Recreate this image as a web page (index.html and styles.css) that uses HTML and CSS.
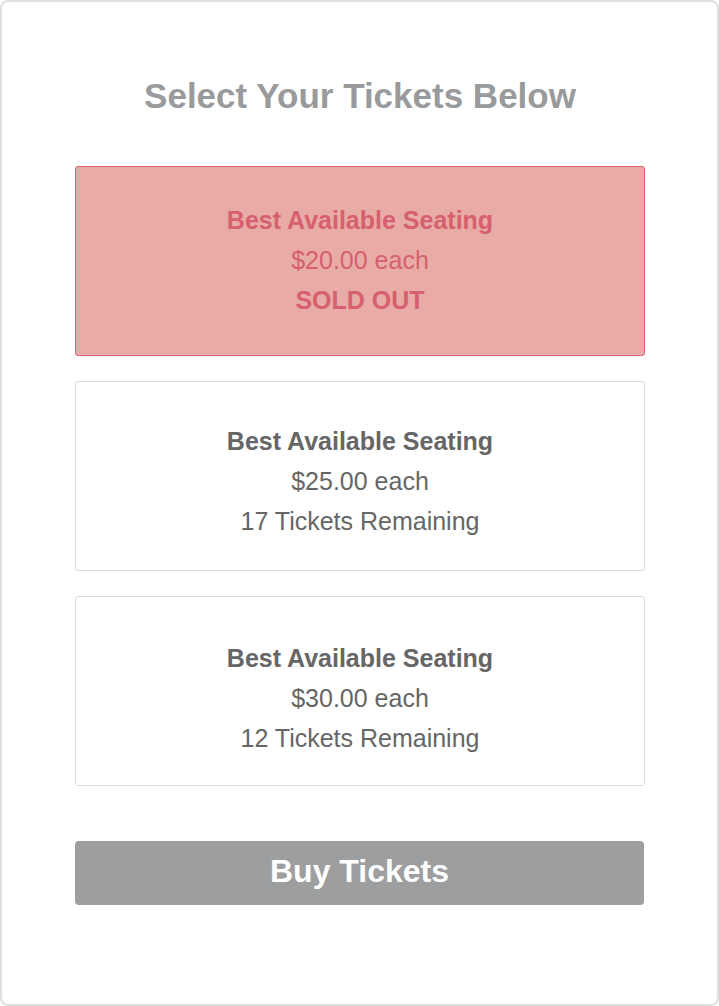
FILE: index.html
```html
<!DOCTYPE html>
<html>
<head>
<meta charset="utf-8">
<link rel="stylesheet" href="styles.css">
</head>
<body>
<div class="panel">
  <h1 class="title">Select Your Tickets Below</h1>
  <div class="tickets">
    <div class="ticket sold">
      <div class="name">Best Available Seating</div>
      <div class="price">$20.00 each</div>
      <div class="status">SOLD OUT</div>
    </div>
    <div class="ticket second">
      <div class="name">Best Available Seating</div>
      <div class="price">$25.00 each</div>
      <div class="remaining">17 Tickets Remaining</div>
    </div>
    <div class="ticket third">
      <div class="name">Best Available Seating</div>
      <div class="price">$30.00 each</div>
      <div class="remaining">12 Tickets Remaining</div>
    </div>
  </div>
  <button class="buy">Buy Tickets</button>
</div>
</body>
</html>
```
FILE: styles.css
```css
html, body {
  margin: 0;
  padding: 0;
  background: #fff;
}
body {
  font-family: "Liberation Sans", Arial, sans-serif;
}
.panel {
  box-sizing: border-box;
  width: 719px;
  height: 1006px;
  border: 2px solid #e0e0e0;
  border-radius: 8px;
  padding: 0 72px 0 73px;
  display: flex;
  flex-direction: column;
}
.title {
  margin: 72px 0 0;
  font-size: 35px;
  line-height: 44px;
  font-weight: bold;
  color: #999a9b;
  text-align: center;
}
.tickets {
  margin-top: 48px;
  display: flex;
  flex-direction: column;
  gap: 25px;
}
.ticket {
  box-sizing: border-box;
  height: 190px;
  padding-top: 33px;
  border: 1px solid #dcdcdc;
  border-radius: 3px;
  display: flex;
  flex-direction: column;
  align-items: center;
  color: #666;
  font-size: 25px;
  line-height: 40px;
}
.ticket.second {
  padding-top: 39px;
}
.ticket.third {
  padding-top: 41px;
}
.ticket .name, .ticket .status {
  font-weight: bold;
}
.ticket.sold {
  background: #e8aba5;
  border-color: #d9667a;
  color: #d6606f;
}
.buy {
  margin: 55px 1px 0 0;
  height: 64px;
  border: none;
  border-radius: 4px;
  background: #9d9e9f;
  color: #fff;
  font-family: "Liberation Sans", Arial, sans-serif;
  font-weight: bold;
  font-size: 32px;
  padding: 0 0 4px;
}
```
